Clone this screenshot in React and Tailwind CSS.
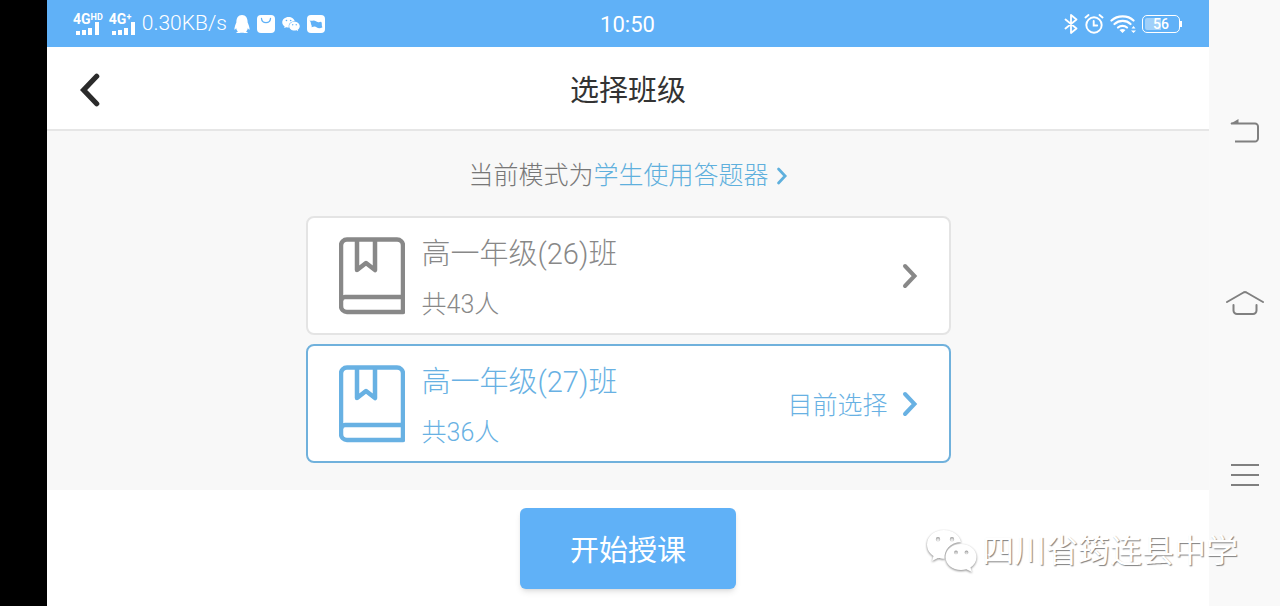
import { useState } from 'react';
import { FaQq } from 'react-icons/fa';
import { AiFillWechat } from 'react-icons/ai';

const classes = [
  { id: 26, name: '高一年级(26)班', count: 43 },
  { id: 27, name: '高一年级(27)班', count: 36 },
];

const Chevron = ({ className, left = false }) => (
  <svg viewBox="0 0 16 26" className={className} fill="none" stroke="currentColor" strokeWidth="4" strokeLinecap="round" strokeLinejoin="miter" aria-hidden="true">
    <path d={left ? 'M13.5 2.5 3.5 13l10 10.5' : 'M3 3l9.5 10L3 23'} />
  </svg>
);

const BookIcon = () => (
  <svg width="66" height="78" viewBox="0 0 66 78" fill="none" stroke="currentColor" strokeWidth="4.500" strokeLinejoin="round" aria-hidden="true">
    <path d="M8 2.500h50a6 6 0 0 1 6 6v66.500H8a6 6 0 0 1-6-6V8.500a6 6 0 0 1 6-6z" />
    <path d="M2 64a4 4 0 0 1 4-4h58" />
    <path d="M18 2v31l9-7 9 7V2" />
  </svg>
);

const Signal = ({ label, sup }) => (
  <div className="flex flex-col">
    <span className="flex items-start text-[14px] leading-[13px] font-bold">
      4G<sup className="top-0 text-[9px] leading-[9px]">{sup}</sup>
    </span>
    <svg width="27" height="13" viewBox="0 0 27 13" className="-mt-1" fill="currentColor" aria-label={label}>
      <path d="M3 9h4v4H3zM9 8h4v5H9zM15 6h4v7h-4zM22 0h4v13h-4z" />
    </svg>
  </div>
);

const BagIcon = () => (
  <svg width="18" height="18" viewBox="0 0 18 18" aria-hidden="true">
    <rect width="18" height="18" rx="4" fill="currentColor" />
    <path d="M4.500 3.500c.5 5.500 8.500 5.500 9 0" fill="none" stroke="#60b1f7" strokeWidth="1.300" strokeLinecap="round" />
  </svg>
);

const WaveIcon = () => (
  <svg width="18" height="18" viewBox="0 0 18 18" aria-hidden="true">
    <rect width="18" height="18" rx="4" fill="currentColor" />
    <path d="M2.500 5.500c2.500 1 4-.8 6.500.7s3.500.9 5 .5c1.500 1 .2 3.500 1.500 5.500-2.200 1.400-4.200 1.300-6 0s-3-.2-5 0c.8-1.500-.3-2-.5-3.200S4 7 2.500 5.500z" fill="#60b1f7" />
  </svg>
);

const BluetoothIcon = () => (
  <svg width="14" height="20" viewBox="0 0 14 20" fill="none" stroke="currentColor" strokeWidth="1.800" strokeLinejoin="round" strokeLinecap="round" aria-hidden="true">
    <path d="M1.500 5.500l11 9L7 19V1l5.500 4.500-11 9" />
  </svg>
);

const AlarmIcon = () => (
  <svg width="20" height="20" viewBox="0 0 20 20" fill="none" stroke="currentColor" strokeWidth="1.900" strokeLinecap="round" aria-hidden="true">
    <circle cx="10" cy="11" r="7.700" />
    <path d="M9.700 7v4.500h3.500M1.500 3.500L4.500 1M18.500 3.500L15.500 1" />
  </svg>
);

const WifiIcon = () => (
  <svg width="26" height="18" viewBox="0 0 26 18" fill="none" stroke="currentColor" strokeWidth="2.200" strokeLinecap="round" aria-hidden="true">
    <path d="M1.500 5.500c6-5.500 16.500-5.500 22 0M4.500 9c4.500-4.200 12-4.200 16 0M8 12.500c2.500-2.200 6.500-2.200 9 0" />
    <path d="M9.500 15q3-2 6 0l-3 3zM21.500 13.500l2-2.500 2 2.500zM21 15.500h5l-2.500 2.500z" fill="currentColor" stroke="none" />
  </svg>
);

const StatusBar = () => (
  <div className="flex h-[47px] items-center bg-[#60b1f7] pr-[27px] pl-[26px] text-white">
    <div className="flex flex-1 items-center gap-[6px]">
      <Signal label="SIM 1" sup="HD" />
      <Signal label="SIM 2" sup="+" />
      <span className="text-[21px] font-light">0.30KB/s</span>
      <FaQq size={18} />
      <BagIcon />
      <AiFillWechat size={20} />
      <WaveIcon />
    </div>
    <span className="pt-[2px] text-[22px]">10:50</span>
    <div className="flex flex-1 items-center justify-end gap-[6px]">
      <BluetoothIcon />
      <AlarmIcon />
      <WifiIcon />
      <div className="flex items-center">
        <span className="flex h-[18px] w-[38px] items-center justify-center rounded-[5px] border border-white bg-linear-to-r from-white/40 from-50% to-transparent to-50% bg-clip-content p-[2px] text-[14px] leading-none font-medium">
          56
        </span>
        <span className="h-[6px] w-[2px] bg-white" />
      </div>
    </div>
  </div>
);

const ClassCard = ({ item, selected, onSelect }) => (
  <button
    onClick={onSelect}
    aria-pressed={selected}
    className={`flex w-full items-center rounded-lg border-2 bg-white px-[31px] py-[15px] text-left ${
      selected ? 'border-[#70b1dc] text-[#68b1e3]' : 'border-[#e4e4e4] text-[#888888]'
    }`}
  >
    <BookIcon />
    <span className="ml-[17px] flex flex-1 flex-col gap-[17px] font-light">
      <span className="text-[29px] leading-[42px]">{item.name}</span>
      <span className="text-[25px] leading-[26px]">共{item.count}人</span>
    </span>
    {selected && <span className="mr-[14px] pt-1 text-[25px] font-light">目前选择</span>}
    <Chevron className="h-[26px] w-[16px]" />
  </button>
);

const SystemNav = () => (
  <nav className="flex w-[71px] flex-col items-center justify-between bg-[#f9f9f9] pt-[117px] pb-[117px] text-[#808080]">
    <button aria-label="Back">
      <svg width="30" height="28" viewBox="0 0 30 28" fill="none" stroke="currentColor" strokeWidth="2">
        <path d="M1 6.500h24a3 3 0 0 1 3 3v12a3 3 0 0 1-3 3H5" />
        <path d="M0 7L8.500 2v5z" fill="currentColor" stroke="none" />
      </svg>
    </button>
    <button aria-label="Home">
      <svg width="40" height="28" viewBox="0 0 40 28" fill="none" stroke="currentColor" strokeWidth="2" strokeLinecap="round">
        <path d="M2 13L18.500 3.500q1.500-.8 3 0L38 13" />
        <path d="M8.500 16v5.500a3.500 3.500 0 0 0 3.500 3.500h16a3.500 3.500 0 0 0 3.500-3.500V16" />
      </svg>
    </button>
    <button aria-label="Menu">
      <svg width="28" height="28" viewBox="0 0 28 28" stroke="currentColor" strokeWidth="2">
        <path d="M0 4h28M0 14h28M0 24h28" />
      </svg>
    </button>
  </nav>
);

const Watermark = () => (
  <div className="pointer-events-none absolute right-[42px] bottom-[32px] flex items-center gap-1 text-white">
    <svg width="52" height="46" viewBox="0 0 52 46" className="drop-shadow-[0px_1px_1px_#888888]" fill="currentColor" aria-hidden="true">
      <path
        fillRule="evenodd"
        d="M18 2C8 2 1 8.500 1 16.500c0 5 2.500 9 6.500 11.500L6 33l6-3c2 .6 4 .8 6.500.8C18 22 24 14.500 35 14 33.500 7 26.500 2 18 2zM12 9a2.200 2.200 0 1 1 0 4.400A2.200 2.200 0 0 1 12 9zm14 0a2.200 2.200 0 1 1 0 4.400A2.200 2.200 0 0 1 26 9z"
      />
      <path
        fillRule="evenodd"
        d="M35 16c-9 0-15.500 6-15.500 13S26 42 35 42c2 0 3.600-.3 5.300-.8L46 44l-1.500-4.500c3.700-2.500 6-6 6-10.500C50.500 22 44 16 35 16zM30 22.500a1.900 1.900 0 1 1 0 3.800 1.900 1.900 0 0 1 0-3.800zm10.500 0a1.900 1.900 0 1 1 0 3.800 1.900 1.900 0 0 1 0-3.800z"
      />
    </svg>
    <span className="text-[32px] leading-[42px] [text-shadow:1px_1px_1px_#808080]">四川省筠连县中学</span>
  </div>
);

const App = () => {
  const [selectedId, setSelectedId] = useState(27);

  return (
    <div className="relative flex min-h-screen bg-white font-[Roboto,'Noto_Sans_CJK_SC',sans-serif]">
      <div className="w-[47px] bg-black" />

      <div className="flex flex-1 flex-col">
        <StatusBar />

        <header className="flex items-center border-b-2 border-[#e6e6e6] px-[32px] pt-[22px] pb-[18px]">
          <div className="flex flex-1">
            <button aria-label="返回" className="text-[#2b2b2b]">
              <Chevron left className="h-[34px] w-[21px]" />
            </button>
          </div>
          <h1 className="pt-[2px] text-[29px] leading-[40px] text-[#333333]">选择班级</h1>
          <div className="flex-1" />
        </header>

        <main className="flex flex-1 flex-col items-center bg-[#f8f8f8] px-6 pt-[26px]">
          <p className="flex items-center text-[25px] leading-[38px] font-light text-[#777777]">
            当前模式为
            <a href="#mode" className="flex items-center gap-[7px] text-[#5fb0dd]">
              学生使用答题器
              <Chevron className="h-[18px] w-[12px]" />
            </a>
          </p>
          <div className="mt-[21px] flex w-full max-w-[645px] flex-col gap-[9px]">
            {classes.map((item) => (
              <ClassCard
                key={item.id}
                item={item}
                selected={item.id === selectedId}
                onSelect={() => setSelectedId(item.id)}
              />
            ))}
          </div>
        </main>

        <footer className="flex justify-center bg-white pt-[18px] pb-[17px]">
          <button className="rounded-md bg-[#60b1f7] px-[50px] pt-[23px] pb-[17px] text-[29px] leading-[41px] text-white shadow-md">
            开始授课
          </button>
        </footer>
      </div>

      <SystemNav />
      <Watermark />
    </div>
  );
};

export default App;
